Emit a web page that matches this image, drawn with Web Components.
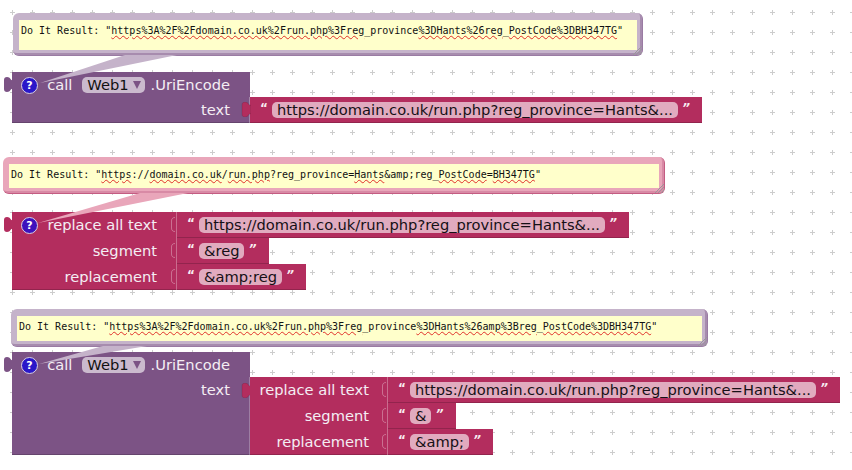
<!DOCTYPE html>
<html>
<head>
<meta charset="utf-8">
<title>Blocks</title>
<style>
  html, body { margin: 0; background: #fff; }
</style>
</head>
<body>
<ai-canvas>
  <ai-bubble class="purple" style="left:13px;top:13px;width:630px;height:43px" tail="112,42 164,42 27,70">Do It Result: "<ai-typo>https%3A%2F%2Fdomain.co.uk%2Frun.php%3Freg</ai-typo>_province<ai-typo>%3DHants%26reg</ai-typo>_<ai-typo>PostCode%3DBH347TG</ai-typo>"</ai-bubble>
  <ai-block tab style="left:12px;top:72px;--bk:#7c5385;--label-w:238px">
    <ai-row short><ai-help slot="icon"></ai-help><span>call</span><ai-dropdown>Web1</ai-dropdown><span>.UriEncode</span></ai-row>
    <ai-row>text<ai-string slot="input" plug>https://domain.co.uk/run.php?reg_province=Hants&amp;...</ai-string></ai-row>
  </ai-block>

  <ai-bubble class="pink" style="left:3px;top:157px;width:662px;height:37px" tail="137,36 185,36 35,66">Do It Result: "<ai-typo>https</ai-typo>://<ai-typo>domain.co.uk</ai-typo>/<ai-typo>run.php</ai-typo>?reg_province=<ai-typo>Hants</ai-typo>&amp;amp;reg_<ai-typo>PostCode</ai-typo>=<ai-typo>BH347TG</ai-typo>"</ai-bubble>
  <ai-block tab style="left:12px;top:212px;--bk:#b32d5e;--label-w:165px">
    <ai-row socket><ai-help slot="icon" class="violet"></ai-help><span>replace all text</span><ai-string slot="input">https://domain.co.uk/run.php?reg_province=Hants&amp;...</ai-string></ai-row>
    <ai-row socket>segment<ai-string slot="input">&amp;reg</ai-string></ai-row>
    <ai-row socket>replacement<ai-string slot="input">&amp;amp;reg</ai-string></ai-row>
  </ai-block>

  <ai-bubble class="purple" style="left:11px;top:309px;width:697px;height:38px" tail="92,37 136,37 28,55">Do It Result: "<ai-typo>https%3A%2F%2Fdomain.co.uk%2Frun.php%3Freg</ai-typo>_province<ai-typo>%3DHants%26amp%3Breg</ai-typo>_<ai-typo>PostCode%3DBH347TG</ai-typo>"</ai-bubble>
  <ai-block tab style="left:12px;top:352px;--bk:#7c5385;--label-w:238px">
    <ai-row short><ai-help slot="icon"></ai-help><span>call</span><ai-dropdown>Web1</ai-dropdown><span>.UriEncode</span></ai-row>
    <ai-row>text
      <ai-block slot="input" plug style="--bk:#b32d5e;--label-w:138px;--label-pad:19px">
        <ai-row socket>replace all text<ai-string slot="input">https://domain.co.uk/run.php?reg_province=Hants&amp;...</ai-string></ai-row>
        <ai-row socket>segment<ai-string slot="input">&amp;</ai-string></ai-row>
        <ai-row socket>replacement<ai-string slot="input">&amp;amp;</ai-string></ai-row>
      </ai-block>
    </ai-row>
  </ai-block>
</ai-canvas>

<script>
// puzzle tab on the left edge of a block
const TAB = `<svg class="tab" width="10" height="15" viewBox="0 0 10 15"><path d="M10 3.5C7.5 3.5 7.5 0 4 0 2 0 1 1 1 3V12C1 14 2 15 4 15 7.5 15 7.5 11.5 10 11.5Z"/></svg>`;

class AiCanvas extends HTMLElement {
    constructor() {
        super();
        this.attachShadow({ mode: 'open' });
        this.shadowRoot.innerHTML = `
            <style>
              :host { display: block; position: relative; width: 852px; height: 470px; overflow: hidden;
                      background: #fff; font-family: "DejaVu Sans", sans-serif; }
              svg { position: absolute; inset: 0; }
            </style>
            <svg width="852" height="470">
              <defs>
                <pattern id="grid" width="20" height="20" patternUnits="userSpaceOnUse">
                  <path d="M10 12.5H15M12.5 10V15" stroke="#ccc" stroke-width="1"/>
                </pattern>
              </defs>
              <rect width="852" height="470" fill="url(#grid)"/>
            </svg>
            <slot></slot>
        `;
    }
}

class AiBubble extends HTMLElement {
    constructor() {
        super();
        this.attachShadow({ mode: 'open' });
        this.shadowRoot.innerHTML = `
            <style>
              :host { display: block; position: absolute; box-sizing: border-box; z-index: 2;
                      padding: 7px 5px 5px 6px; border-radius: 6px; background: var(--light);
                      border-right: 1px solid var(--edge); border-bottom: 1px solid var(--edge);
                      box-shadow: inset -2px -2px 0 var(--mid); }
              :host(.purple) { --light: #c5b3ca; --mid: #a78cae; --edge: #9a7ba3; }
              :host(.pink) { --light: #e9a6ba; --mid: #d88aa5; --edge: #c45c82; }
              .note { box-sizing: border-box; height: 100%; background: #ffffcb; overflow: hidden; white-space: nowrap;
                      padding: 5px 0 0 2px; font: 10px/12px "DejaVu Sans Mono", monospace; color: #111; }
              svg.tail { position: absolute; left: 0; top: 0; overflow: visible; pointer-events: none; }
              svg.grip { position: absolute; right: 0; bottom: 0; }
            </style>
            <svg class="tail" width="1" height="1"><polygon fill="var(--light)"/></svg>
            <div class="note"><slot></slot></div>
            <svg class="grip" width="9" height="9" viewBox="0 0 9 9"><path d="M0 9L9 0M3 9L9 3M6 9L9 6" stroke="#999" stroke-width="1"/></svg>
        `;
    }

    connectedCallback() {
        this.shadowRoot.querySelector('polygon').setAttribute('points', this.getAttribute('tail'));
    }
}

class AiTypo extends HTMLElement {
    constructor() {
        super();
        this.attachShadow({ mode: 'open' });
        // no whitespace round the slot: this sits inline in running text
        this.shadowRoot.innerHTML = `<style>:host { text-decoration: underline wavy #e0302a 1px; text-underline-offset: 1px; }</style><slot></slot>`;
    }
}

class AiBlock extends HTMLElement {
    constructor() {
        super();
        this.attachShadow({ mode: 'open' });
        this.shadowRoot.innerHTML = `
            <style>
              :host { display: flex; flex-direction: column; align-items: flex-start; }
              :host([tab]) { position: absolute; z-index: 1; }
              :host([plug]) { position: relative; box-shadow: -1px 0 0 rgba(255,255,255,.25); }
              .tab { display: none; position: absolute; left: -9px; top: 5px; fill: var(--bk); }
              :host([tab]) .tab, :host([plug]) .tab { display: block; }
              :host([plug]) .tab { top: 6px; stroke: rgba(0,0,0,.12); }
            </style>
            ${TAB}
            <slot></slot>
        `;
    }
}

class AiRow extends HTMLElement {
    constructor() {
        super();
        this.attachShadow({ mode: 'open' });
        this.shadowRoot.innerHTML = `
            <style>
              :host { display: flex; align-items: stretch; min-height: 26px; }
              :host([short]) { height: 25px; min-height: 25px; }
              .label { box-sizing: border-box; position: relative; width: var(--label-w); padding: 0 var(--label-pad, 20px) 0 9px;
                       background: var(--bk); display: flex; align-items: flex-start; justify-content: flex-end;
                       font-size: 14.67px; line-height: 26px; color: #f4eef4; white-space: nowrap; }
              :host(:last-child) .label { box-shadow: inset 0 -1px 0 rgba(0,0,0,.18); }
              .icon { margin-right: auto; display: flex; padding-top: 5px; }
              .sock { display: none; position: absolute; right: 0; top: 5px; }
              :host([socket]) .sock { display: block; }
            </style>
            <div class="label">
              <span class="icon"><slot name="icon"></slot></span>
              <slot></slot>
              <svg class="sock" width="10" height="15" viewBox="0 0 10 15"><path d="M8 0.5C5.5 0.5 4.5 2 4.5 4V11C4.5 13 5.5 14.5 8 14.5" fill="none" stroke="rgba(255,255,255,.32)"/></svg>
            </div>
            <slot name="input"></slot>
        `;
    }
}

class AiHelp extends HTMLElement {
    constructor() {
        super();
        this.attachShadow({ mode: 'open' });
        this.shadowRoot.innerHTML = `
            <style>
              :host { display: block; width: 17px; height: 17px; box-sizing: border-box; border-radius: 50%;
                      background: #2a17c9; border: 1px solid #d8d0e0; color: #fff;
                      font: bold 11px/15px "DejaVu Sans", sans-serif; text-align: center; }
              :host(.violet) { background: #3d11bd; }
            </style>
            ?
        `;
    }
}

class AiDropdown extends HTMLElement {
    constructor() {
        super();
        this.attachShadow({ mode: 'open' });
        this.shadowRoot.innerHTML = `
            <style>
              :host { display: inline-flex; align-items: center; gap: 4px; height: 16px; margin: 5px 6px 0 10px;
                      padding: 0 4px 0 5px; border-radius: 5px; background: #cbbace; color: #111; line-height: 16px; }
            </style>
            <slot></slot>
            <svg width="8" height="8" viewBox="0 0 8 8"><path d="M0 0H8L4 8Z" fill="#7c5385"/></svg>
        `;
    }
}

class AiString extends HTMLElement {
    constructor() {
        super();
        this.attachShadow({ mode: 'open' });
        this.shadowRoot.innerHTML = `
            <style>
              :host { display: flex; position: relative; align-items: flex-start; height: 26px; box-sizing: border-box;
                      padding: 5px 12.5px 0 10px; background: #b32d5e; font-size: 14.67px;
                      box-shadow: -1px 0 0 rgba(255,255,255,.3), inset 0 -1px 0 rgba(0,0,0,.18); white-space: nowrap; }
              .q { width: 12px; color: #f8ecf0; font: bold 12px/12px "DejaVu Sans", sans-serif; }
              .q.end { text-align: right; font-style: italic; }
              .pill { height: 16px; line-height: 16px; padding: 0 5px; border-radius: 5px; background: #e1abbf; color: #161016; }
              .tab { display: none; position: absolute; left: -9px; top: 5px; fill: #b32d5e; stroke: rgba(0,0,0,.12); }
              :host([plug]) .tab { display: block; }
            </style>
            ${TAB}
            <span class="q">“</span>
            <span class="pill"><slot></slot></span>
            <span class="q end">”</span>
        `;
    }
}

customElements.define('ai-canvas', AiCanvas);
customElements.define('ai-bubble', AiBubble);
customElements.define('ai-typo', AiTypo);
customElements.define('ai-block', AiBlock);
customElements.define('ai-row', AiRow);
customElements.define('ai-help', AiHelp);
customElements.define('ai-dropdown', AiDropdown);
customElements.define('ai-string', AiString);
</script>
</body>
</html>
